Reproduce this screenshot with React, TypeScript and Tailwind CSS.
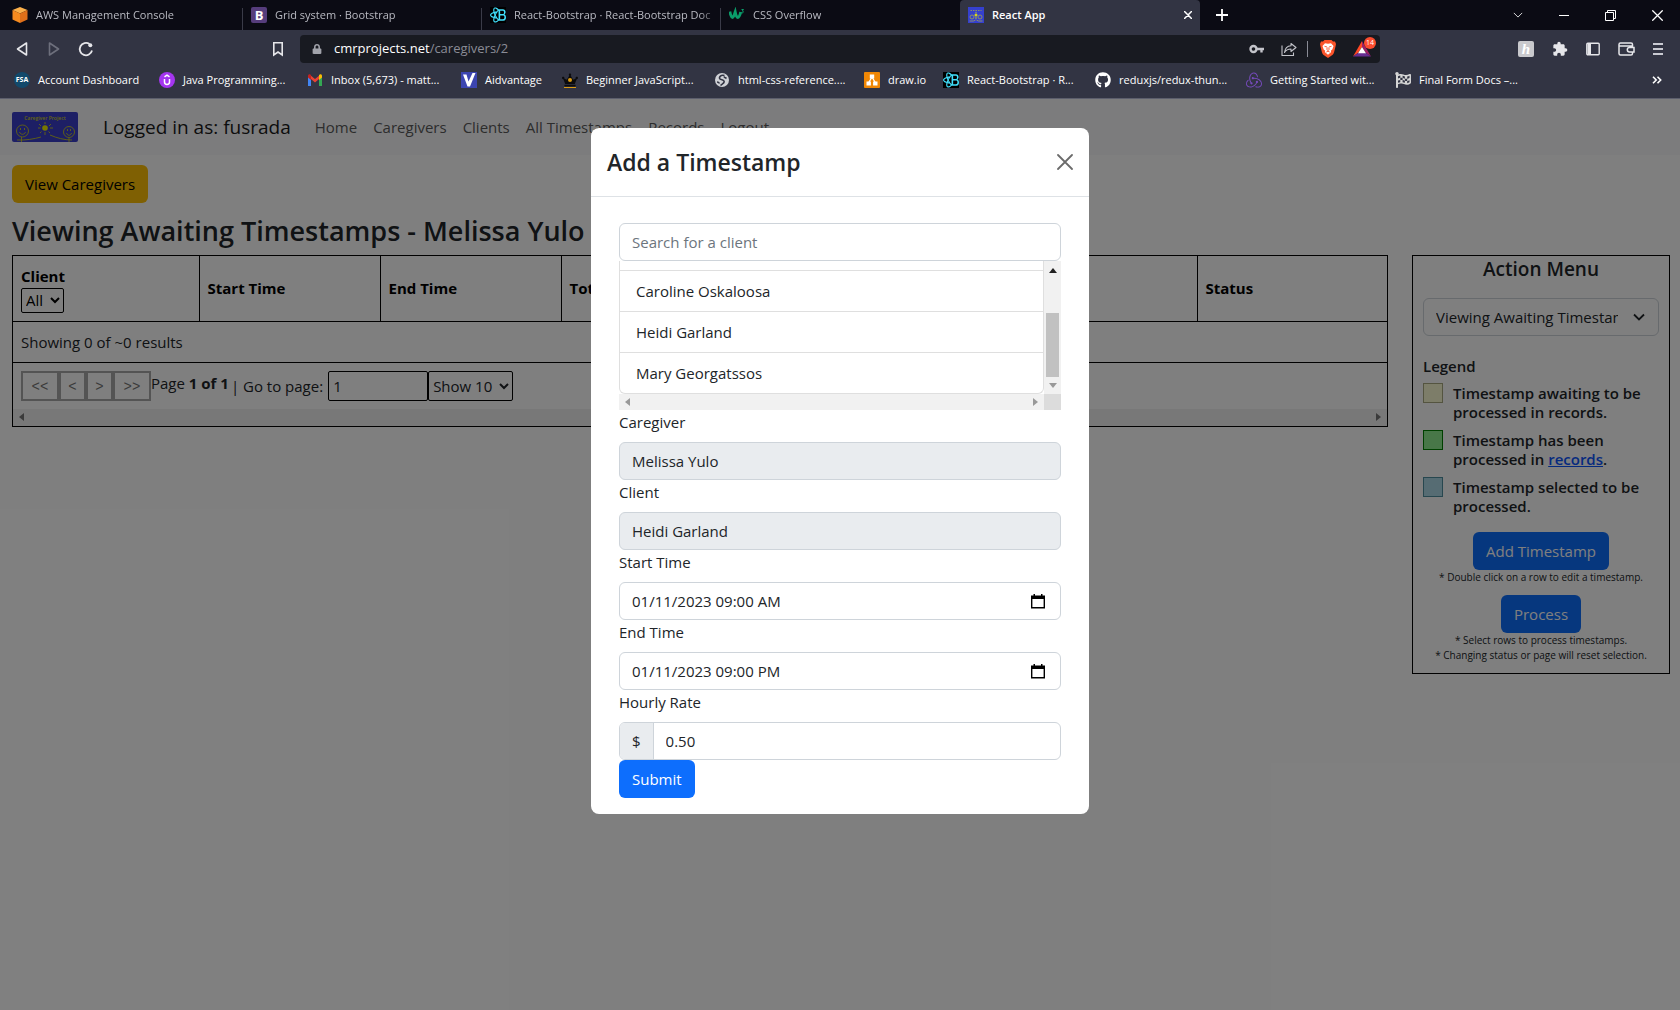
import type { ReactNode } from "react";
import { FaCrown, FaGithub, FaLock, FaFlagCheckered } from "react-icons/fa";
import { MdExtension } from "react-icons/md";
import { SiRedux, SiReactbootstrap } from "react-icons/si";

/* ---------- icons ---------- */

const AwsIcon = () => (
  <svg viewBox="0 0 16 16" className="size-4">
    <path d="M8 0 15.500 3 8 6.500.5 3z" fill="#fbb04a" />
    <path d="M.5 3 8 6.500V16L.5 12.500z" fill="#f68b1f" />
    <path d="M15.500 3 8 6.500V16l7.500-3.500z" fill="#e0701a" />
  </svg>
);

const BootstrapIcon = () => (
  <span className="flex size-4 items-center justify-center rounded-[2px] bg-[#563d7c] text-[13px] leading-4 font-bold text-white">
    B
  </span>
);

const ReactBootstrapIcon = () => (
  <span className="flex size-4 items-center justify-center bg-black text-[#41e0fd]">
    <SiReactbootstrap className="size-4" />
  </span>
);

const W3Icon = () => (
  <svg viewBox="0 0 16 16" className="size-4" fill="none" stroke="#0a9c6a">
    <path d="M.8 4.500C1.500 8 2.500 10.500 3.500 10.500 4.800 10.500 5.500 7 6.200 5c.6 3 1.500 5.500 2.500 5.500 1.300 0 2.300-2.500 3-5.500" strokeWidth="2.900" />
    <path d="M12.500 2.500h2l-1.200 1.500c1.600 0 1.600 2.200-.9 1.900" strokeWidth="1" />
  </svg>
);

const CaregiverIcon = () => (
  <svg viewBox="0 0 16 16" className="size-4">
    <rect width="16" height="16" fill="#3540cf" />
    <g fill="none" stroke="#8d8f6a">
      <path d="M2.500 3.500h11" strokeDasharray="1.500 1" />
      <circle cx="4" cy="10" r="2" />
      <circle cx="12" cy="10" r="2" />
      <path d="M1.500 14h4l2-1M14.500 14h-4l-2-1" />
    </g>
    <circle cx="8" cy="8" r="1.500" fill="#d5d21b" />
    <path d="M8 4.800v1.500M8 10v2" stroke="#d5d21b" strokeWidth=".8" />
  </svg>
);

const FsaIcon = () => (
  <span className="flex size-4 items-center justify-center rounded-full bg-[#12496b] text-[7px] leading-4 font-bold text-white">
    FSA
  </span>
);

const UdemyIcon = () => (
  <svg viewBox="0 0 16 16" className="size-4">
    <circle cx="8" cy="8" r="8" fill="#a435f0" />
    <path d="M5.500 4.800 8 3.200l2.500 1.600M5.500 7v3c0 3.200 5 3.200 5 0V7" fill="none" stroke="#fff" strokeWidth="1.500" />
  </svg>
);

const GmailIcon = () => (
  <svg viewBox="0 0 16 12" className="h-3 w-4">
    <path d="M1 1.500V12h3V5z" fill="#4285f4" />
    <path d="M15 1.500V12h-3V5z" fill="#34a853" />
    <path d="M4 5v-3.200L8 5l4-3.200V5L8 8.500z" fill="#ea4335" />
    <path d="M1 3.500v-1.500C1 .2 2.800-.2 4 .9V6z" fill="#c5221f" />
    <path d="M15 3.500v-1.500C15 .2 13.200-.2 12 .9V6z" fill="#fbbc04" />
  </svg>
);

const AidvantageIcon = () => (
  <svg viewBox="0 0 16 16" className="size-4">
    <rect width="16" height="16" fill="#3c45b0" />
    <path d="M2 2.500h3.500l2 7L11.500 1h3L9 14.500H6.500z" fill="#fff" />
  </svg>
);

const CrownIcon = () => (
  <span className="relative flex size-4 items-center justify-center">
    <FaCrown className="size-4 text-[#0b0b0d]" />
    <span className="absolute top-1.5 left-1.5 size-1 rounded-full bg-[#d99a13]" />
    <span className="absolute bottom-0 left-0.5 h-px w-3 bg-[#d99a13]" />
  </span>
);

const GlobeIcon = () => (
  <svg viewBox="0 0 16 16" className="size-4">
    <circle cx="8" cy="8" r="7" fill="#cfd1d6" />
    <path
      d="M10.500 3.500C7 2.500 4.500 5 6 7c1.200 1.200 4 .5 4.200 2.500.2 2-2.700 2.500-3.700 4M12.500 6.500c-1.500-1-2-.5-2.500-2M3 10c1 0 2 .5 2.500 1.500"
      fill="none"
      stroke="#323443"
      strokeWidth="1.600"
    />
  </svg>
);

const DrawIoIcon = () => (
  <svg viewBox="0 0 16 16" className="size-4">
    <rect width="16" height="16" rx="1" fill="#f08705" />
    <path d="M8 5 4.500 11M8 5l3.500 6" stroke="#fff" strokeWidth="1.300" />
    <rect x="5.800" y="2.500" width="4.400" height="4" fill="#fff" />
    <rect x="2.500" y="9.500" width="4.400" height="4" fill="#fff" />
    <rect x="9.100" y="9.500" width="4.400" height="4" fill="#fff" />
  </svg>
);

const BackIcon = () => (
  <svg viewBox="0 0 12 16" className="h-4 w-3" fill="none" stroke="currentColor" strokeWidth="1.600" strokeLinejoin="round">
    <path d="M10.500 2v12L1.500 8z" />
  </svg>
);

const ReloadIcon = () => (
  <svg viewBox="0 0 16 16" className="size-4" fill="none" stroke="currentColor" strokeWidth="1.800">
    <path d="M14 9.500A6.200 6.200 0 1 1 11.500 3" />
    <circle cx="12.300" cy="4.200" r="2" fill="currentColor" stroke="none" />
  </svg>
);

const BookmarkIcon = () => (
  <svg viewBox="0 0 12 16" className="h-4 w-3" fill="none" stroke="currentColor" strokeWidth="1.600">
    <path d="M1.800 1.800h8.400v12.200L6 11l-4.200 3z" />
  </svg>
);

const KeyIcon = () => (
  <svg viewBox="0 0 16 10" className="h-2.5 w-4" fill="none" stroke="currentColor" strokeWidth="2.400">
    <circle cx="4.500" cy="5" r="3" />
    <path d="M7.500 5H15M12.500 5v3.500" />
  </svg>
);

const ShareIcon = () => (
  <svg viewBox="0 0 16 16" className="size-4" fill="none" stroke="currentColor" strokeWidth="1.100">
    <path d="M1 4.500v10h11.500v-3" />
    <path d="M10 2.500 15 6.500l-5 4V8C7 8 5 9 3.500 11.500 4 7.500 6.500 5 10 4.800z" strokeLinejoin="round" />
  </svg>
);

const BraveIcon = () => (
  <svg viewBox="0 0 16 18" className="h-[18px] w-4">
    <path d="M4.500 0h7l1.500 1.600 2-.2L16 4l-.5 2.500L14 12.500c-.3 1.200-1 2-2 2.800L8 18l-4-2.700c-1-.8-1.700-1.600-2-2.800L.5 6.500 0 4l1-2.600 2 .2z" fill="#fb542b" />
    <path d="M5 3.200 8 3.800l3-.6L13.500 6l-1.200 3.500-1.500 1.300.4 1.200L8 14.800 4.800 12l.4-1.200L3.700 9.500 2.500 6z" fill="#fff" />
    <path d="M4.500 6.300 7 7M11.500 6.300 9 7M7.300 7.500 6.800 9.500 8 10.500l1.200-1-.5-2M6.300 12 8 11.200 9.700 12" fill="none" stroke="#fb542b" strokeWidth=".9" />
  </svg>
);

const BatIcon = () => (
  <svg viewBox="0 0 18 16" className="h-4 w-[18px]">
    <path d="M9 0 0 15.500 5 12l4-6z" fill="#ff4724" />
    <path d="M9 0l9 15.500L13 12 9 6z" fill="#9e1f63" />
    <path d="M0 15.500h18L13 12H5z" fill="#662d91" />
    <path d="M9 6l4 6.200H5z" fill="#fff" />
  </svg>
);

const SidebarIcon = () => (
  <svg viewBox="0 0 14 14" className="size-3.5">
    <rect x=".8" y="1.300" width="12.400" height="11.400" rx="1" fill="none" stroke="currentColor" strokeWidth="1.400" />
    <path d="M1.500 1.500h3.500v11H1.500z" fill="currentColor" />
  </svg>
);

const WalletIcon = () => (
  <svg viewBox="0 0 17 14" className="h-3.5 w-[17px]" fill="none" stroke="currentColor" strokeWidth="1.500">
    <path d="M14.500 5V2.500c0-1-.5-1.500-1.500-1.500H2.500C1.500 1 1 1.700 1 2.500v9c0 1 .7 1.500 1.500 1.500H13c1 0 1.500-.6 1.500-1.500V10" />
    <path d="M1 4h13.500M16 5.500h-4.500a2.200 2.200 0 0 0 0 4.400H16z" />
  </svg>
);

const CrossIcon = ({ className, width = 1.5 }: { className: string; width?: number }) => (
  <svg viewBox="0 0 16 16" className={className} fill="none" stroke="currentColor" strokeWidth={width} strokeLinecap="round">
    <path d="M1 1l14 14M15 1L1 15" />
  </svg>
);

const ChevronIcon = ({ className }: { className: string }) => (
  <svg viewBox="0 0 12 8" className={className} fill="none" stroke="currentColor" strokeWidth="1.800">
    <path d="M1 1.500 6 6.500l5-5" />
  </svg>
);

const CalendarIcon = () => (
  <svg viewBox="0 0 14 15" className="h-[15px] w-3.5">
    <path d="M2.500 0h1.500v2h-1.500zM10 0h1.500v2H10z" fill="#000" />
    <path d="M.7 2.200h12.600v11.600H.7z" fill="none" stroke="#000" strokeWidth="1.400" />
    <path d="M.7 2.200h12.600V5H.7z" fill="#000" />
  </svg>
);

const ProjectLogo = () => (
  <svg viewBox="0 0 66 30" className="h-[30px] w-[66px] rounded-[2px]">
    <rect width="66" height="30" fill="#3b3fcb" />
    <text x="33" y="8" textAnchor="middle" fontSize="5" fontWeight="600" fill="#c8c820" fontFamily="Open Sans">
      Caregiver Project
    </text>
    <g fill="none" stroke="#c8c820" strokeWidth=".9">
      <circle cx="10.500" cy="19" r="6" />
      <path d="M7.500 20c1 3 5 3 6 0M8.500 16v2M12.500 16v2M9.500 25v5M5 28c8 .5 17-1 24-3" />
      <circle cx="57" cy="20" r="5.500" />
      <path d="M54.500 21c1 3 4 3 5 0M55.500 17v2M58.500 17v2M57 25.500V30M38 23c7 3 14 5 22 5" />
      <path d="M33 10v2M33 20v3M27 12l2 2M39 12l-2 2M26 16h2.500M38 16h3M28 21l1.500-1.500M38 21l-1.500-1.500" />
    </g>
    <circle cx="33" cy="16" r="2.800" fill="#f0ee00" />
  </svg>
);

const arrowShape = {
  left: "M5 0v8L0 4z",
  right: "M0 0v8l5-4z",
  up: "M0 5h8L4 0z",
  down: "M0 0h8L4 5z",
};

function Arrow({ dir, className }: { dir: keyof typeof arrowShape; className: string }) {
  const flat = dir === "up" || dir === "down";
  return (
    <svg viewBox={flat ? "0 0 8 5" : "0 0 5 8"} className={flat ? "h-[5px] w-2" : "h-2 w-[5px]"}>
      <path d={arrowShape[dir]} className={className} />
    </svg>
  );
}

/* ---------- browser window ---------- */

const tabs: { label: string; icon: ReactNode; box: string; divider: boolean }[] = [
  { label: "AWS Management Console", icon: <AwsIcon />, box: "w-[243px] pl-3", divider: true },
  { label: "Grid system · Bootstrap", icon: <BootstrapIcon />, box: "w-[239px] pl-2", divider: true },
  { label: "React-Bootstrap · React-Bootstrap Doc", icon: <ReactBootstrapIcon />, box: "w-[239px] pl-2", divider: true },
  { label: "CSS Overflow", icon: <W3Icon />, box: "w-[239px] pl-2", divider: false },
];

const bookmarks: { label: string; icon: ReactNode; width: string }[] = [
  { label: "Account Dashboard", icon: <FsaIcon />, width: "w-[145px]" },
  { label: "Java Programming...", icon: <UdemyIcon />, width: "w-[148px]" },
  { label: "Inbox (5,673) - matt...", icon: <GmailIcon />, width: "w-[154px]" },
  { label: "Aidvantage", icon: <AidvantageIcon />, width: "w-[101px]" },
  { label: "Beginner JavaScript...", icon: <CrownIcon />, width: "w-[152px]" },
  { label: "html-css-reference....", icon: <GlobeIcon />, width: "w-[150px]" },
  { label: "draw.io", icon: <DrawIoIcon />, width: "w-[79px]" },
  { label: "React-Bootstrap · R...", icon: <ReactBootstrapIcon />, width: "w-[152px]" },
  { label: "reduxjs/redux-thun...", icon: <FaGithub className="size-4" />, width: "w-[151px]" },
  { label: "Getting Started wit...", icon: <SiRedux className="size-4 text-[#764abc]" />, width: "w-[149px]" },
  { label: "Final Form Docs –...", icon: <FaFlagCheckered className="size-4 text-[#d5d5d5]" />, width: "w-[150px]" },
];

function TabStrip() {
  return (
    <div className="flex h-[30px] items-stretch bg-[#0b0b14] text-[11px] text-[#b9bac2]">
      {tabs.map((tab) => (
        <button key={tab.label} className={"flex min-w-0 items-center text-left " + tab.box}>
          {tab.icon}
          <span className="ml-2 min-w-0 flex-1 overflow-hidden whitespace-nowrap [mask-image:linear-gradient(to_right,#000_90%,transparent)]">
            {tab.label}
          </span>
          <span className={tab.divider ? "mt-2 h-[22px] w-px bg-[#3a3b48]" : "w-px"} />
        </button>
      ))}
      <div className="flex w-60 items-center rounded-t bg-[#323443] pr-1.5 pl-2 font-semibold text-white">
        <CaregiverIcon />
        <span className="ml-2 flex-1">React App</span>
        <button aria-label="Close tab" className="p-0.5">
          <CrossIcon className="size-2" width={3} />
        </button>
      </div>
      <button aria-label="New tab" className="ml-4 flex items-center text-white">
        <svg viewBox="0 0 12 12" className="size-3" stroke="currentColor" strokeWidth="1.800">
          <path d="M6 0v12M0 6h12" />
        </svg>
      </button>
      <div className="ml-auto flex items-center gap-9 pr-[17px] text-white">
        <button aria-label="Search tabs">
          <svg viewBox="0 0 12 8" className="h-2 w-2.5" fill="none" stroke="currentColor">
            <path d="M1 1.500 6 6.500l5-5" />
          </svg>
        </button>
        <button aria-label="Minimize" className="h-px w-2.5 bg-white" />
        <button aria-label="Restore">
          <svg viewBox="0 0 11 11" className="size-[11px]" fill="none" stroke="currentColor">
            <path d="M.5 2.500h8v8h-8zM2.500 2.500v-2h8v8h-2" />
          </svg>
        </button>
        <button aria-label="Close window">
          <CrossIcon className="size-[11px]" width={1.8} />
        </button>
      </div>
    </div>
  );
}

function Toolbar() {
  return (
    <div className="flex h-9 items-center bg-[#323443] pt-0.5 text-[#e6e6ea]">
      <button aria-label="Back" className="ml-4">
        <BackIcon />
      </button>
      <button aria-label="Forward" className="ml-5 rotate-180 text-[#6d6f7c]">
        <BackIcon />
      </button>
      <button aria-label="Reload" className="ml-[18px]">
        <ReloadIcon />
      </button>
      <button aria-label="Bookmark this page" className="ml-[178px]">
        <BookmarkIcon />
      </button>
      <div className="ml-4 flex h-7 flex-1 items-center rounded bg-[#181a21] pr-1 pl-3">
        <FaLock className="size-2.5 text-[#a1a3ab]" />
        <span className="ml-3 flex-1 text-[13px] text-[#8a8c96]">
          <span className="text-white">cmrprojects.net</span>/caregivers/2
        </span>
        <div className="flex items-center text-[#c3c4ca]">
          <KeyIcon />
          <span className="ml-4">
            <ShareIcon />
          </span>
          <span className="mr-3 ml-2.5 h-4 w-px bg-[#8a8c96]" />
          <BraveIcon />
          <span className="relative ml-[17px] pr-[5px]">
            <BatIcon />
            <span className="absolute -top-1 right-0 flex size-3 items-center justify-center rounded-full bg-[#fb4c2f] text-[7px] text-white">
              14
            </span>
          </span>
        </div>
      </div>
      <div className="flex items-center gap-[18px] pr-[17px] pl-[138px]">
        <button
          aria-label="Honey"
          className="size-4 rounded-[2px] bg-[#c9c9cd] font-['Liberation_Serif',serif] text-[15px] leading-4 font-bold text-white italic"
        >
          h
        </button>
        <button aria-label="Extensions">
          <MdExtension className="size-4" />
        </button>
        <button aria-label="Sidebar">
          <SidebarIcon />
        </button>
        <button aria-label="Wallet">
          <WalletIcon />
        </button>
        <button aria-label="Menu" className="flex w-2.5 flex-col gap-[3px]">
          <span className="h-0.5 bg-[#c9cad2]" />
          <span className="h-0.5 bg-[#c9cad2]" />
          <span className="h-0.5 bg-[#c9cad2]" />
        </button>
      </div>
    </div>
  );
}

function BookmarkBar() {
  return (
    <nav
      aria-label="Bookmarks"
      className="flex h-[33px] items-center border-b border-[#5c5e6c] bg-[#323443] pb-1 pl-3.5 text-[11px] text-white"
    >
      {bookmarks.map((b) => (
        <div key={b.label} className={b.width}>
          <a href="#" className="flex items-center gap-2 whitespace-nowrap">
            {b.icon}
            {b.label}
          </a>
        </div>
      ))}
      <button aria-label="More bookmarks" className="mr-[18px] ml-auto">
        <svg viewBox="0 0 10 8" className="h-2 w-2.5" fill="none" stroke="currentColor" strokeWidth="1.600">
          <path d="M1 .8 4.200 4 1 7.200M5.500.8 8.700 4 5.500 7.200" />
        </svg>
      </button>
    </nav>
  );
}

/* ---------- caregiver page ---------- */

const navLinks = ["Home", "Caregivers", "Clients", "All Timestamps", "Records", "Logout"];

function SiteNav() {
  return (
    <nav className="flex h-14 items-center bg-[#f8f9fa] px-3">
      <a href="#" aria-label="Caregiver Project">
        <ProjectLogo />
      </a>
      <span className="ml-[25px] text-[19px] text-[#1a1a1a]">Logged in as: fusrada</span>
      <div className="ml-6 flex gap-4 text-[#5a5a5a]">
        {navLinks.map((l) => (
          <a key={l} href="#">
            {l}
          </a>
        ))}
      </div>
    </nav>
  );
}

const pageButton =
  "border-2 border-[#a9a9a9] pt-0.5 text-center font-['Liberation_Mono',monospace] text-[14px] text-[#767676]";

function TimestampTable() {
  return (
    <div className="min-w-0 flex-1 border border-black">
      <table className="w-full table-fixed border-collapse text-left">
        <colgroup>
          <col className="w-[186px]" />
          <col className="w-[181px]" />
          <col className="w-[181px]" />
          <col />
          <col />
          <col />
          <col className="w-[190px]" />
        </colgroup>
        <thead>
          <tr className="h-[65px] border-b border-black text-black [&>th]:border-r [&>th]:border-black [&>th]:px-2 [&>th:last-child]:border-r-0">
            <th scope="col">
              <label htmlFor="client-filter" className="block leading-6">
                Client
              </label>
              <select id="client-filter" className="block h-[25px] w-[43px] rounded-[2px] border border-black font-normal">
                <option>All</option>
              </select>
            </th>
            <th scope="col">Start Time</th>
            <th scope="col">End Time</th>
            <th scope="col">Total Time</th>
            <th scope="col"></th>
            <th scope="col"></th>
            <th scope="col">Status</th>
          </tr>
        </thead>
        <tbody>
          <tr className="h-[41px] border-b border-black">
            <td colSpan={7} className="px-2">
              Showing 0 of ~0 results
            </td>
          </tr>
        </tbody>
      </table>
      <div className="flex items-stretch p-2">
        <button className={pageButton + " w-[38px]"}>&lt;&lt;</button>
        <button className={pageButton + " w-[27px]"}>&lt;</button>
        <button className={pageButton + " w-[27px]"}>&gt;</button>
        <button className={pageButton + " w-[38px]"}>&gt;&gt;</button>
        <span>
          Page <b>1 of 1</b>
        </span>
        <label htmlFor="goto-page" className="ml-0.5 leading-[30px]">
          | Go to page:
        </label>
        <input id="goto-page" defaultValue="1" className="ml-[5px] h-[30px] w-[100px] rounded-[2px] border border-black px-1" />
        <select aria-label="Rows per page" className="h-[30px] w-[85px] rounded-[2px] border border-black">
          <option>Show 10</option>
        </select>
      </div>
      <div className="flex h-[17px] items-center justify-between bg-[#f1f1f1] px-1.5">
        <Arrow dir="left" className="fill-[#777]" />
        <Arrow dir="right" className="fill-[#777]" />
      </div>
    </div>
  );
}

const legend: { swatch: string; text: ReactNode }[] = [
  { swatch: "border-[#a8a880] bg-[#fafad2]", text: "Timestamp awaiting to be processed in records." },
  {
    swatch: "border-[#008000] bg-[#90ee90]",
    text: (
      <>
        Timestamp has been processed in{" "}
        <a href="#" className="text-[#0d55fd] underline">
          records
        </a>
        .
      </>
    ),
  },
  { swatch: "border-[#4f8f9f] bg-[#add8e6]", text: "Timestamp selected to be processed." },
];

const primaryButton = "h-[38px] rounded-md bg-[#0d6efd] px-[13px] text-white";

function ActionMenu() {
  return (
    <aside className="flex w-[258px] flex-col border border-black px-2.5 pb-2.5">
      <h2 className="text-center text-[19px] leading-[27px] font-semibold">Action Menu</h2>
      <div className="relative mt-[15px]">
        <select
          aria-label="Status filter"
          className="h-[38px] w-full appearance-none overflow-hidden rounded-md border border-[#ced4da] pr-10 pl-3"
        >
          <option>Viewing Awaiting Timestamps</option>
        </select>
        <ChevronIcon className="pointer-events-none absolute top-[15px] right-3.5 h-2 w-3" />
      </div>
      <h3 className="mt-[18px] leading-6 font-semibold">Legend</h3>
      <ul className="mt-[5px] flex flex-col gap-2 font-semibold">
        {legend.map((item, i) => (
          <li key={i} className="flex items-start gap-2.5">
            <span className={"size-5 shrink-0 border " + item.swatch} />
            <span className="pt-px leading-[19px]">{item.text}</span>
          </li>
        ))}
      </ul>
      <div className="mt-4 flex flex-col items-center text-[10px] leading-[15px]">
        <button className={primaryButton + " text-[15px]"}>Add Timestamp</button>
        <p>* Double click on a row to edit a timestamp.</p>
        <button className={primaryButton + " mt-2.5 text-[15px]"}>Process</button>
        <p>* Select rows to process timestamps.</p>
        <p>* Changing status or page will reset selection.</p>
      </div>
    </aside>
  );
}

/* ---------- dialog ---------- */

const clients = ["Caroline Oskaloosa", "Heidi Garland", "Mary Georgatssos"];
const field = "h-[38px] w-full rounded-md border border-[#ced4da] px-3";

function Field({ id, label, children }: { id: string; label: string; children: ReactNode }) {
  return (
    <div>
      <label htmlFor={id} className="mb-2 block leading-6">
        {label}
      </label>
      {children}
    </div>
  );
}

function DateField({ id, label, value }: { id: string; label: string; value: string }) {
  return (
    <Field id={id} label={label}>
      <div className="flex h-[38px] items-center rounded-md border border-[#ced4da] pr-[15px] pl-3">
        <input id={id} defaultValue={value} className="min-w-0 flex-1 outline-none" />
        <button type="button" aria-label={"Pick " + label}>
          <CalendarIcon />
        </button>
      </div>
    </Field>
  );
}

function ClientList() {
  return (
    <div className="grid grid-cols-[1fr_17px]">
      <ul className="rounded-b-md border-x border-b border-[#dfdfdf]">
        <li className="h-[9px]" />
        {clients.map((c) => (
          <li key={c} className="h-[41px] border-t border-[#dfdfdf]">
            <button type="button" className="block w-full px-4 text-left leading-10">
              {c}
            </button>
          </li>
        ))}
      </ul>
      <div className="flex flex-col items-center bg-[#f1f1f1] pt-[7px]">
        <Arrow dir="up" className="fill-[#222]" />
        <span className="mt-10 h-16 w-[13px] bg-[#c1c1c1]" />
        <span className="mt-1.5">
          <Arrow dir="down" className="fill-[#999]" />
        </span>
      </div>
      <div className="flex h-4 items-center justify-between bg-[#f1f1f1] px-1.5">
        <Arrow dir="left" className="fill-[#999]" />
        <Arrow dir="right" className="fill-[#999]" />
      </div>
      <div className="bg-[#dcdcdc]" />
    </div>
  );
}

function TimestampDialog() {
  return (
    <div className="absolute inset-0 flex items-start justify-center bg-black/50 pt-[29px]">
      <div role="dialog" aria-labelledby="dialog-title" className="w-[498px] rounded-lg bg-white">
        <div className="flex h-[69px] items-center justify-between border-b border-[#dee2e6] px-4">
          <h1 id="dialog-title" className="text-[23px] font-semibold">
            Add a Timestamp
          </h1>
          <button aria-label="Close" className="text-[#6b6b6b]">
            <CrossIcon className="size-4" width={1.8} />
          </button>
        </div>
        <form className="px-7 pt-[26px] pb-4">
          <input
            aria-label="Search for a client"
            placeholder="Search for a client"
            className={field + " block placeholder:text-[#6c757d]"}
          />
          <ClientList />
          <Field id="caregiver" label="Caregiver">
            <input id="caregiver" readOnly value="Melissa Yulo" className={field + " block bg-[#e9ecef]"} />
          </Field>
          <Field id="client" label="Client">
            <input id="client" readOnly value="Heidi Garland" className={field + " block bg-[#e9ecef]"} />
          </Field>
          <DateField id="start-time" label="Start Time" value="01/11/2023 09:00 AM" />
          <DateField id="end-time" label="End Time" value="01/11/2023 09:00 PM" />
          <Field id="hourly-rate" label="Hourly Rate">
            <div className="flex h-[38px] overflow-hidden rounded-md border border-[#ced4da]">
              <span className="flex items-center border-r border-[#ced4da] bg-[#e9ecef] px-3">$</span>
              <input id="hourly-rate" defaultValue="0.50" className="min-w-0 flex-1 px-3 outline-none" />
            </div>
          </Field>
          <button type="button" className={primaryButton + " block"}>
            Submit
          </button>
        </form>
      </div>
    </div>
  );
}

export default function App() {
  return (
    <div className="flex min-h-screen flex-col font-['Open_Sans','Noto_Sans',sans-serif]">
      <header>
        <TabStrip />
        <Toolbar />
        <BookmarkBar />
      </header>
      <div className="relative flex-1 bg-white text-[15px] leading-6 text-[#212529]">
        <SiteNav />
        <main className="pt-2.5 pr-2.5 pl-3">
          <button className="h-[38px] rounded-md bg-[#ffc107] px-[13px] text-black">View Caregivers</button>
          <h1 className="mt-3 mb-2 text-[27px] leading-8 font-semibold">Viewing Awaiting Timestamps - Melissa Yulo</h1>
          <div className="flex items-start gap-6">
            <TimestampTable />
            <ActionMenu />
          </div>
        </main>
        <TimestampDialog />
      </div>
    </div>
  );
}
